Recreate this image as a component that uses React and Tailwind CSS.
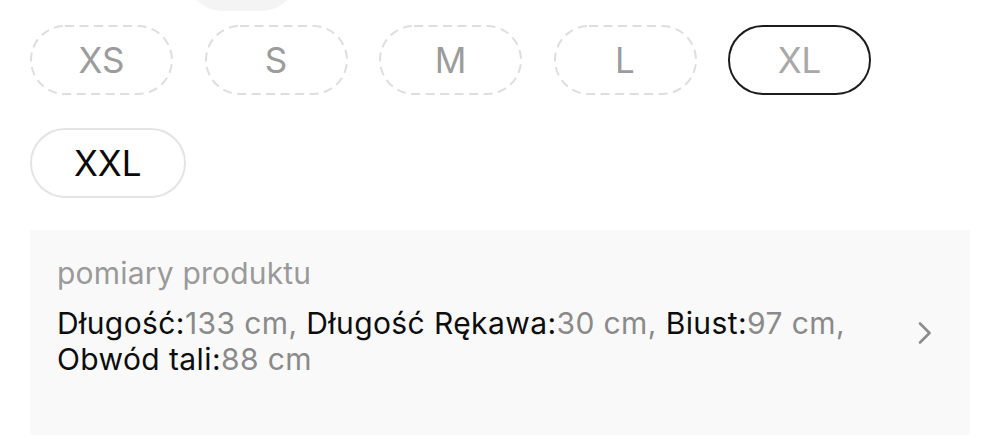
import React from "react";

const sizes = [
  { label: "XS", state: "out" },
  { label: "S", state: "out" },
  { label: "M", state: "out" },
  { label: "L", state: "out" },
  { label: "XL", state: "selectedOut" },
  { label: "XXL", state: "available" },
];

function SizePill({ label, state }) {
  const base =
    "relative h-[70px] min-w-[143px] px-[42px] rounded-full flex items-center justify-center text-[35px] leading-none";
  if (state === "out") {
    return (
      <div className={`${base} text-[#9c9c9c]`}>
        {/* dashed outline for sold-out sizes */}
        <svg className="absolute inset-0 w-full h-full" viewBox="0 0 143 70" fill="none">
          <rect
            x="1"
            y="1"
            width="141"
            height="68"
            rx="34"
            stroke="#dedede"
            strokeWidth="2"
            strokeDasharray="9 5.5"
          />
        </svg>
        <span className="relative">{label}</span>
      </div>
    );
  }
  if (state === "selectedOut") {
    return (
      <div className={`${base} border-2 border-solid border-[#1c1c1c] text-[#a8a8a8]`}>
        {label}
      </div>
    );
  }
  return (
    <div className={`${base} min-w-[155px] border-2 border-solid border-[#e4e4e4] text-[#0a0a0a]`}>
      {label}
    </div>
  );
}

const measures = [
  { name: "Długość", value: "133 cm" },
  { name: "Długość Rękawa", value: "30 cm" },
  { name: "Biust", value: "97 cm" },
  { name: "Obwód tali", value: "88 cm" },
];

export default function App() {
  return (
    <div
      className="w-[1000px] h-[440px] bg-white overflow-hidden"
      style={{ fontFamily: "Inter, 'Liberation Sans', Arial, sans-serif" }}
    >
      {/* bottom edge of the swatch above */}
      <div className="h-[11px] overflow-hidden pl-[187px]">
        <div className="w-[110px] h-[70px] -mt-[59px] rounded-full bg-[#f4f4f4]" />
      </div>

      <div className="px-[30px] pt-[14px] flex flex-wrap gap-x-[31.5px] gap-y-[33px]">
        {sizes.map((s) => (
          <SizePill key={s.label} {...s} />
        ))}
      </div>

      <div className="mx-[30px] mt-[32px] h-[205px] bg-[#f9f9f9] flex items-center pl-[27px] pr-[37px]">
        <div className="flex-1 self-start pt-[25px] pr-[32px]">
          <div className="text-[30px] leading-[36px] text-[#9a9a9a] tracking-[0.2px]">
            pomiary produktu
          </div>
          <div className="mt-[14px] text-[30px] leading-[36px] tracking-[0.4px]">
            {measures.map((m, i) => (
              <React.Fragment key={m.name}>
                <span className="text-[#0d0d0d]">{m.name}:</span>
                <span className="text-[#8a8a8a]">
                  {m.value}
                  {i < measures.length - 1 ? ", " : ""}
                </span>
              </React.Fragment>
            ))}
          </div>
        </div>
        <svg width="16" height="24" viewBox="0 0 16 24" fill="none" className="shrink-0">
          <path
            d="M3 2.5 L12.5 12 L3 21.5"
            stroke="#8c8c8c"
            strokeWidth="2.6"
            strokeLinecap="round"
            strokeLinejoin="round"
          />
        </svg>
      </div>
    </div>
  );
}
